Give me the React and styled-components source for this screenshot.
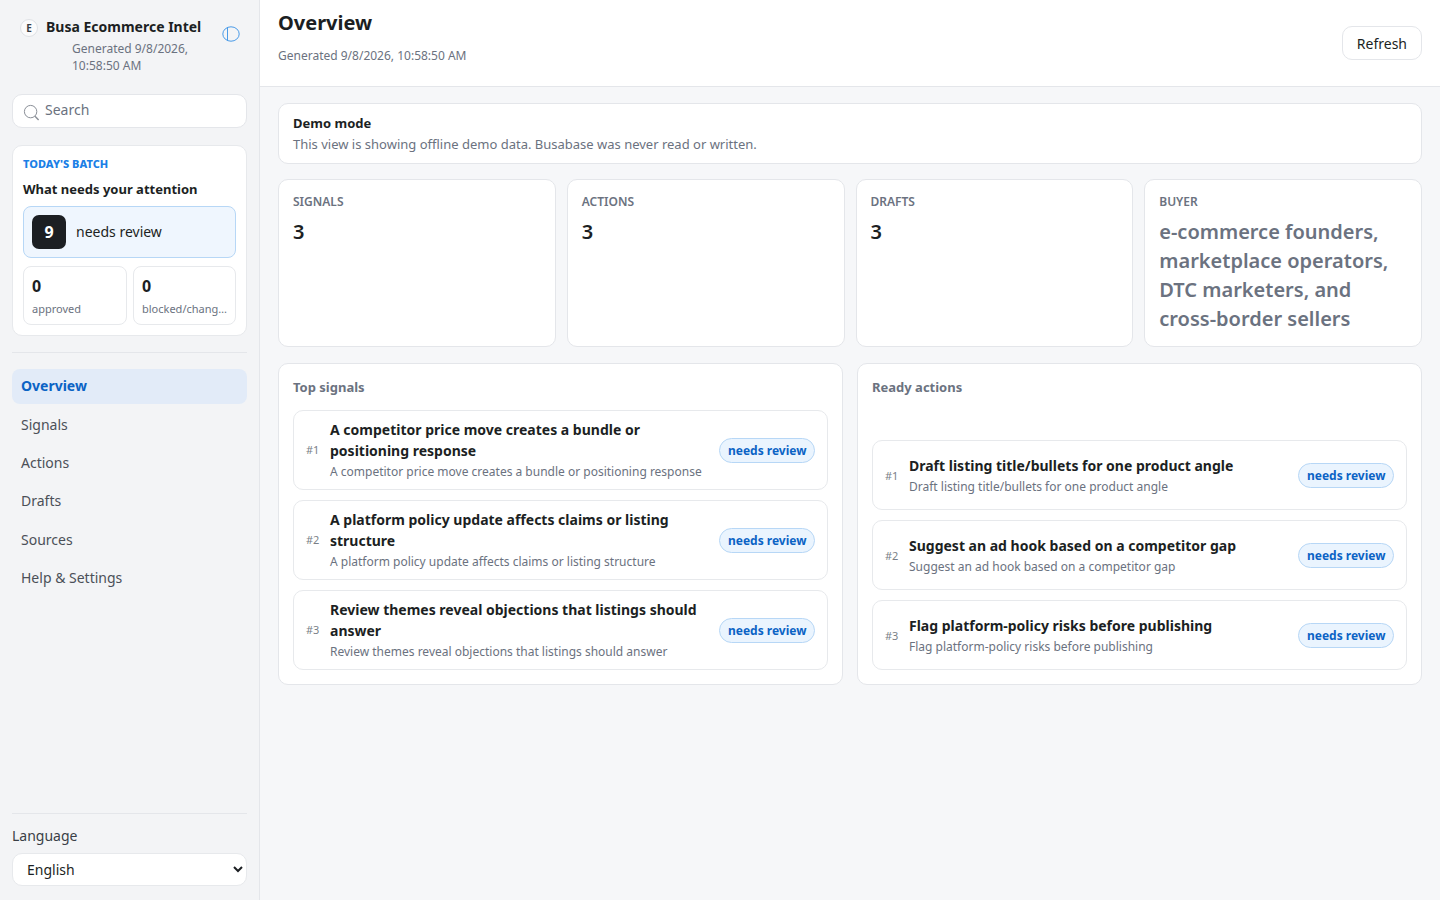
import React from "react";
import styled, { createGlobalStyle } from "styled-components";

const Global = createGlobalStyle`
  * { box-sizing: border-box; }
  html, body { margin: 0; padding: 0; height: 100%; }
  body {
    font-family: "Noto Sans", sans-serif;
    color: #1c1f23;
    background: #f6f7f9;
  }
`;

const Shell = styled.div`
  display: grid;
  grid-template-columns: 260px 1fr;
  height: 900px;
  overflow: hidden;
`;

const Side = styled.aside`
  display: flex;
  flex-direction: column;
  background: #f3f4f6;
  border-right: 1px solid #e4e6ea;
  padding: 12px 12px 14px;
`;

const Brand = styled.div`
  display: grid;
  grid-template-columns: 18px 1fr 20px;
  column-gap: 8px;
  padding: 5px 6px 0 8px;
  height: 82px;
`;

const BrandMark = styled.div`
  width: 18px;
  height: 18px;
  margin-top: 2px;
  border-radius: 50%;
  border: 1px solid #dfe2e6;
  background: #fbfbfc;
  display: flex;
  align-items: center;
  justify-content: center;
  font-size: 10px;
  font-weight: 700;
  color: #3a3f46;
`;

const BrandName = styled.div`
  font-size: 14px;
  font-weight: 700;
  line-height: 19px;
  white-space: nowrap;
`;

const BrandSub = styled.div`
  font-size: 12px;
  line-height: 17px;
  color: #6b7280;
  margin: 4px 0 0 26px;
`;

const PanelToggle = styled.svg`
  width: 20px;
  height: 20px;
  margin-top: 7px;
  color: #4a9be8;
`;

const SearchBox = styled.div`
  display: flex;
  align-items: center;
  gap: 5px;
  height: 34px;
  padding: 0 10px 4px;
  background: #fff;
  border: 1px solid #e4e6ea;
  border-radius: 10px;
  font-size: 14px;
  color: #6b7280;
`;

const SearchGlyph = styled.svg`
  width: 17px;
  height: 19px;
  margin-top: 8px;
  color: #8b9098;
`;

const Batch = styled.section`
  margin-top: 17px;
  padding: 10px;
  height: 191px;
  background: #fff;
  border: 1px solid #e7e9ec;
  border-radius: 10px;
`;

const BatchTag = styled.div`
  font-size: 11px;
  font-weight: 800;
  line-height: 16px;
  color: #1b7fe6;
`;

const BatchTitle = styled.div`
  font-size: 13px;
  font-weight: 700;
  line-height: 18px;
  margin-top: 8px;
`;

const ReviewTile = styled.div`
  display: flex;
  align-items: center;
  gap: 10px;
  height: 52px;
  margin-top: 8px;
  padding: 0 8px 1px;
  background: #eff6fe;
  border: 1px solid #b7d7f6;
  border-radius: 8px;
  font-size: 14px;
`;

const ReviewCount = styled.div`
  width: 34px;
  height: 34px;
  margin-top: 1px;
  border-radius: 7px;
  background: #1c1f23;
  color: #fff;
  font-size: 16px;
  font-weight: 700;
  display: flex;
  align-items: center;
  justify-content: center;
`;

const MiniGrid = styled.div`
  display: grid;
  grid-template-columns: 104px 103px;
  gap: 6px;
  margin-top: 8px;
`;

const MiniCard = styled.div`
  height: 59px;
  padding: 8px;
  min-width: 0;
  background: #fff;
  border: 1px solid #e7e9ec;
  border-radius: 8px;
`;

const MiniValue = styled.div`
  font-size: 16px;
  font-weight: 700;
  line-height: 22px;
`;

const MiniLabel = styled.div`
  font-size: 11px;
  line-height: 15px;
  margin-top: 4px;
  color: #6b7280;
  white-space: nowrap;
  overflow: hidden;
  text-overflow: ellipsis;
`;

const Rule = styled.hr`
  border: 0;
  border-top: 1px solid #e4e6ea;
  margin: 16px 0;
  width: 100%;
`;

const Nav = styled.nav`
  display: flex;
  flex-direction: column;
  gap: 3px;
`;

const NavItem = styled.a`
  display: flex;
  align-items: center;
  height: 35.15px;
  padding: 0 9px;
  border-radius: 8px;
  font-size: 14px;
  font-weight: ${(p) => (p.$active ? 700 : 400)};
  color: ${(p) => (p.$active ? "#0b63c5" : "#4b5058")};
  background: ${(p) => (p.$active ? "#e2ebf8" : "transparent")};
  padding-bottom: ${(p) => (p.$active ? "2px" : "0")};
`;

const SideFoot = styled.div`
  margin-top: auto;
`;

const FootRule = styled(Rule)`
  margin: 0 0 12px;
`;

const LangLabel = styled.label`
  display: block;
  font-size: 14px;
  line-height: 19px;
  margin-bottom: 8px;
  color: #3a3f46;
`;

const LangSelect = styled.select`
  display: block;
  width: 100%;
  height: 33px;
  padding: 0 10px;
  background: #fff;
  border: 1px solid #e7e9ec;
  border-radius: 10px;
  font: inherit;
  font-size: 14px;
  color: #1c1f23;
`;

const Main = styled.main`
  display: flex;
  flex-direction: column;
  min-width: 0;
`;

const TopBar = styled.header`
  display: flex;
  justify-content: space-between;
  align-items: center;
  height: 87px;
  padding: 0 18px;
  background: #fff;
  border-bottom: 1px solid #e4e6ea;
`;

const PageTitle = styled.h1`
  margin: 0;
  font-size: 20px;
  font-weight: 700;
  line-height: 27px;
`;

const PageSub = styled.div`
  font-size: 12px;
  line-height: 16px;
  margin-top: 12px;
  color: #6b7280;
`;

const TitleBlock = styled.div`
  align-self: flex-start;
  padding-top: 9px;
`;

const RefreshButton = styled.button`
  height: 34px;
  padding: 0 14px;
  background: #fff;
  border: 1px solid #e4e6ea;
  border-radius: 10px;
  font: inherit;
  font-size: 14px;
  color: #1c1f23;
`;

const Content = styled.div`
  display: flex;
  flex-direction: column;
  padding: 16px 18px;
`;

const Notice = styled.section`
  height: 61px;
  padding: 10px 14px;
  background: #fff;
  border: 1px solid #e4e6ea;
  border-radius: 10px;
`;

const NoticeTitle = styled.div`
  font-size: 13px;
  font-weight: 700;
  line-height: 18px;
`;

const NoticeText = styled.div`
  font-size: 13px;
  line-height: 18px;
  margin-top: 3px;
  color: #6b7280;
`;

const Stats = styled.div`
  display: grid;
  grid-template-columns: repeat(4, 1fr);
  gap: 11px;
  margin-top: 15px;
`;

const StatCard = styled.div`
  height: 168px;
  padding: 14px 14px 13px;
  background: #fff;
  border: 1px solid #e4e6ea;
  border-radius: 10px;
`;

const StatLabel = styled.div`
  font-size: 12px;
  font-weight: 600;
  line-height: 16px;
  color: #6b7280;
`;

const StatValue = styled.div`
  font-size: 20px;
  font-weight: 600;
  line-height: 29px;
  margin-top: 7px;
  color: ${(p) => (p.$muted ? "#6b7280" : "#1c1f23")};
`;

const Panels = styled.div`
  display: grid;
  grid-template-columns: 1fr 1fr;
  gap: 14px;
  margin-top: 16px;
`;

const Panel = styled.section`
  display: flex;
  flex-direction: column;
  padding: 14px;
  height: 322px;
  background: #fff;
  border: 1px solid #e4e6ea;
  border-radius: 10px;
`;

const PanelTitle = styled.h2`
  margin: 0;
  font-size: 13px;
  font-weight: 700;
  line-height: 18px;
  color: #6b7280;
`;

const RowList = styled.div`
  display: flex;
  flex-direction: column;
  gap: 10px;
  margin-top: auto;
`;

const Row = styled.article`
  display: grid;
  grid-template-columns: 24px 1fr auto;
  align-items: center;
  height: ${(p) => p.$height}px;
  padding: 0 12px;
  border: 1px solid #e7e9ec;
  border-radius: 10px;
`;

const RowRank = styled.div`
  font-size: 11px;
  color: #7a7f87;
  margin-bottom: ${(p) => (p.$lift ? "2px" : "0")};
`;

const RowBody = styled.div`
  min-width: 0;
  padding-right: 16px;
  margin-bottom: ${(p) => (p.$lift ? "2px" : "0")};
`;

const RowTitle = styled.div`
  font-size: 14px;
  font-weight: 700;
  line-height: 21px;
`;

const RowSub = styled.div`
  font-size: 12px;
  line-height: 17px;
  margin-top: 2px;
  color: #6b7280;
`;

const Pill = styled.span`
  display: inline-flex;
  align-items: center;
  height: 25px;
  padding: 0 7.5px;
  border-radius: 999px;
  background: #eaf4fe;
  border: 1px solid #b7d7f6;
  font-size: 12px;
  font-weight: 700;
  color: #0b63c5;
  white-space: nowrap;
`;

const navItems = ["Overview", "Signals", "Actions", "Drafts", "Sources", "Help & Settings"];

const signals = [
  "A competitor price move creates a bundle or positioning response",
  "A platform policy update affects claims or listing structure",
  "Review themes reveal objections that listings should answer",
];

const actions = [
  "Draft listing title/bullets for one product angle",
  "Suggest an ad hook based on a competitor gap",
  "Flag platform-policy risks before publishing",
];

const stats = [
  { label: "SIGNALS", value: "3" },
  { label: "ACTIONS", value: "3" },
  { label: "DRAFTS", value: "3" },
  {
    label: "BUYER",
    value: "e-commerce founders, marketplace operators, DTC marketers, and cross-border sellers",
    muted: true,
  },
];

const RowGroup = ({ items, height, lift }) => (
  <RowList>
    {items.map((text, i) => (
      <Row key={text} $height={height}>
        <RowRank $lift={lift}>#{i + 1}</RowRank>
        <RowBody $lift={lift}>
          <RowTitle>{text}</RowTitle>
          <RowSub>{text}</RowSub>
        </RowBody>
        <Pill>needs review</Pill>
      </Row>
    ))}
  </RowList>
);

export default function App() {
  return (
    <>
      <Global />
      <Shell>
        <Side>
          <Brand>
            <BrandMark>E</BrandMark>
            <div>
              <BrandName>Busa Ecommerce Intel</BrandName>
              <BrandSub>Generated 9/8/2026, 10:58:50 AM</BrandSub>
            </div>
            <PanelToggle viewBox="0 0 20 20" fill="none" stroke="currentColor" strokeWidth="1">
              <ellipse cx="10" cy="10" rx="8.2" ry="7.2" />
              <path d="M6.5 3.2v13.6" />
            </PanelToggle>
          </Brand>
          <SearchBox>
            <SearchGlyph viewBox="0 0 17 19" fill="none" stroke="currentColor" strokeWidth="1">
              <circle cx="7.6" cy="7.6" r="6.2" />
              <path d="M12 12.2l3.6 3.8" strokeWidth="1.4" />
            </SearchGlyph>
            Search
          </SearchBox>
          <Batch>
            <BatchTag>TODAY'S BATCH</BatchTag>
            <BatchTitle>What needs your attention</BatchTitle>
            <ReviewTile>
              <ReviewCount>9</ReviewCount>
              needs review
            </ReviewTile>
            <MiniGrid>
              <MiniCard>
                <MiniValue>0</MiniValue>
                <MiniLabel>approved</MiniLabel>
              </MiniCard>
              <MiniCard>
                <MiniValue>0</MiniValue>
                <MiniLabel>blocked/changes</MiniLabel>
              </MiniCard>
            </MiniGrid>
          </Batch>
          <Rule />
          <Nav>
            {navItems.map((item, i) => (
              <NavItem key={item} $active={i === 0}>
                {item}
              </NavItem>
            ))}
          </Nav>
          <SideFoot>
            <FootRule />
            <LangLabel htmlFor="lang">Language</LangLabel>
            <LangSelect id="lang" defaultValue="English">
              <option>English</option>
            </LangSelect>
          </SideFoot>
        </Side>
        <Main>
          <TopBar>
            <TitleBlock>
              <PageTitle>Overview</PageTitle>
              <PageSub>Generated 9/8/2026, 10:58:50 AM</PageSub>
            </TitleBlock>
            <RefreshButton>Refresh</RefreshButton>
          </TopBar>
          <Content>
            <Notice>
              <NoticeTitle>Demo mode</NoticeTitle>
              <NoticeText>This view is showing offline demo data. Busabase was never read or written.</NoticeText>
            </Notice>
            <Stats>
              {stats.map((s) => (
                <StatCard key={s.label}>
                  <StatLabel>{s.label}</StatLabel>
                  <StatValue $muted={s.muted}>{s.value}</StatValue>
                </StatCard>
              ))}
            </Stats>
            <Panels>
              <Panel>
                <PanelTitle>Top signals</PanelTitle>
                <RowGroup items={signals} height={80} lift />
              </Panel>
              <Panel>
                <PanelTitle>Ready actions</PanelTitle>
                <RowGroup items={actions} height={70} />
              </Panel>
            </Panels>
          </Content>
        </Main>
      </Shell>
    </>
  );
}
